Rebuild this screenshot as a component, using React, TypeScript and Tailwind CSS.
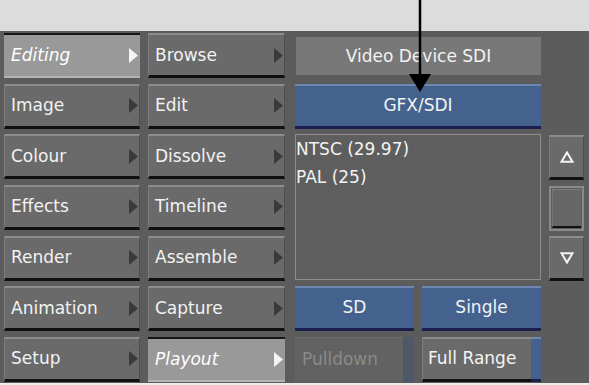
import type { ReactNode } from 'react';

const LEFT_MENU = [
  { label: 'Editing', selected: true },
  { label: 'Image', selected: false },
  { label: 'Colour', selected: false },
  { label: 'Effects', selected: false },
  { label: 'Render', selected: false },
  { label: 'Animation', selected: false },
  { label: 'Setup', selected: false },
];

const SUB_MENU = [
  { label: 'Browse', selected: false },
  { label: 'Edit', selected: false },
  { label: 'Dissolve', selected: false },
  { label: 'Timeline', selected: false },
  { label: 'Assemble', selected: false },
  { label: 'Capture', selected: false },
  { label: 'Playout', selected: true },
];

const FORMATS = ['NTSC (29.97)', 'PAL (25)'];

interface MenuButtonProps {
  label: string;
  selected: boolean;
}

function MenuArrow({ light }: { light: boolean }) {
  return (
    <svg width="9" height="15" viewBox="0 0 9 15" className="shrink-0">
      <polygon points="0,0 9,7.5 0,15" fill={light ? '#f4f4f4' : '#3a3a3a'} />
    </svg>
  );
}

function MenuButton({ label, selected }: MenuButtonProps) {
  if (selected) {
    return (
      <div className="flex h-[45px] items-center justify-between border-t-2 border-b-2 border-t-[#161616] border-b-[#b4b4b4] bg-[#999999] pl-[7px] pr-[2px]">
        <span className="italic text-white">{label}</span>
        <MenuArrow light />
      </div>
    );
  }

  return (
    <div className="flex h-[45px] items-center justify-between border-t-2 border-b-[3px] border-l border-r border-t-[#8c8c8c] border-b-[#111111] border-l-[#7c7c7c] border-r-[#4e4e4e] bg-[#6a6a6a] pl-[6px] pr-[1px]">
      <span className="text-[#f2f2f2]">{label}</span>
      <MenuArrow light={false} />
    </div>
  );
}

function BlueButton({ children, className = '' }: { children: ReactNode; className?: string }) {
  return (
    <div
      className={`flex h-[45px] items-center justify-center border-t-2 border-b-[3px] border-t-[#6d88b0] border-b-[#1a1f4e] bg-[#45628e] text-[#f2f2f2] ${className}`}
    >
      {children}
    </div>
  );
}

function ScrollButton({ up }: { up: boolean }) {
  return (
    <div className="flex h-[45px] items-center justify-center border-t-2 border-b-[3px] border-l border-r border-t-[#8c8c8c] border-b-[#111111] border-l-[#7c7c7c] border-r-[#4e4e4e] bg-[#6a6a6a]">
      <svg width="14" height="12" viewBox="0 0 14 12">
        <polygon
          points={up ? '7,1.5 12.5,10.8 1.5,10.8' : '1.5,1.2 12.5,1.2 7,10.5'}
          fill="none"
          stroke="#f4f4f4"
          strokeWidth="2"
          strokeLinejoin="miter"
        />
      </svg>
    </div>
  );
}

export default function App() {
  return (
    <div className="relative h-[385px] w-[589px] overflow-hidden bg-[#dcdcdc] font-['DejaVu_Sans',sans-serif] text-[17px] leading-none">
      <div className="h-[31px]" />

      <div className="flex h-[352px] bg-[#5c5c5c] pl-[4px] pt-[2px]">
        <div className="flex w-[136px] flex-col gap-[5.67px]">
          {LEFT_MENU.map((item) => (
            <MenuButton key={item.label} label={item.label} selected={item.selected} />
          ))}
        </div>

        <div className="ml-[8px] flex w-[137px] flex-col gap-[5.67px]">
          {SUB_MENU.map((item) => (
            <MenuButton key={item.label} label={item.label} selected={item.selected} />
          ))}
        </div>

        <div className="ml-[10px] flex w-[246px] flex-col gap-[5.67px]">
          <div className="h-[45px] pt-[4px] pl-[1px]">
            <div className="flex h-[38px] items-center justify-center bg-[#787878] text-[#f2f2f2]">
              Video Device SDI
            </div>
          </div>

          <BlueButton>GFX/SDI</BlueButton>

          <div className="h-[146px] border border-[#8e8e8e] bg-[#5e5e5e] text-[#f2f2f2]">
            {FORMATS.map((format) => (
              <div key={format} className="h-[28px] leading-[28px]">
                {format}
              </div>
            ))}
          </div>

          <div className="flex h-[45px] gap-[8px]">
            <BlueButton className="w-[119px]">SD</BlueButton>
            <BlueButton className="flex-1">Single</BlueButton>
          </div>

          <div className="flex h-[45px] gap-[8px]">
            <div className="flex w-[119px]">
              <div className="flex flex-1 items-center border-t border-t-[#6c6c6c] bg-[#626262] pl-[7px] text-[#8a8a8a]">
                Pulldown
              </div>
              <div className="w-[11px] bg-[#4e5868]" />
            </div>
            <div className="flex flex-1">
              <div className="flex flex-1 items-center border-t-2 border-b-[3px] border-l border-t-[#8c8c8c] border-b-[#111111] border-l-[#7c7c7c] bg-[#6a6a6a] pl-[5px] text-[#f4f4f4]">
                Full Range
              </div>
              <div className="w-[10px] border-t-2 border-b-[3px] border-t-[#6d88b0] border-b-[#1a1f4e] bg-[#45628e]" />
            </div>
          </div>
        </div>

        <div className="ml-[8px] flex w-[35px] flex-col gap-[5.67px] pt-[102px]">
          <ScrollButton up />
          <div className="h-[45px] border-2 border-[#8a8a8a] bg-[#5c5c5c] p-[1px]">
            <div className="h-full border-t border-b-2 border-l border-t-[#7a7a7a] border-b-[#111111] border-l-[#777777] bg-[#666666]" />
          </div>
          <ScrollButton up={false} />
        </div>
      </div>

      <div className="h-[2px] bg-[#ececec]" />

      <svg className="absolute left-[400px] top-0" width="40" height="94" viewBox="0 0 40 94">
        <line x1="20" y1="0" x2="20" y2="76" stroke="#000000" strokeWidth="2.5" />
        <polygon points="9,74 31,74 20,92" fill="#000000" />
      </svg>
    </div>
  );
}
